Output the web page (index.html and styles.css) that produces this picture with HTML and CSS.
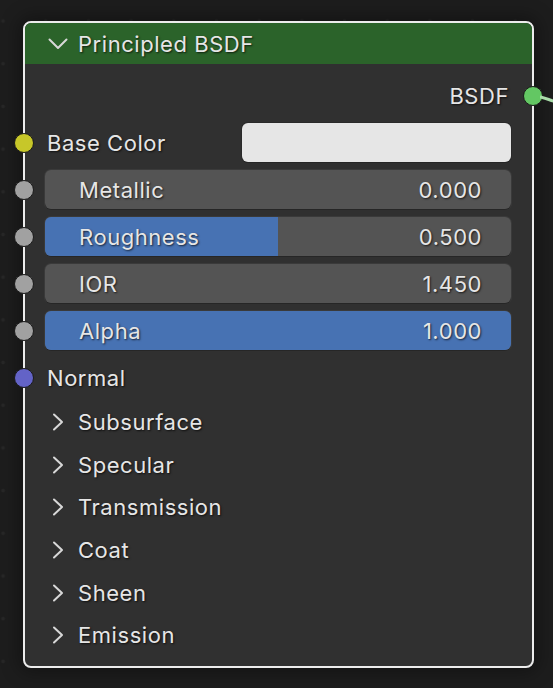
FILE: index.html
```html
<!DOCTYPE html>
<html>
<head>
<meta charset="utf-8">
<link rel="stylesheet" href="styles.css">
</head>
<body>
<div class="canvas">
  <div class="node">
    <div class="header">
      <svg class="hchev" width="20" height="12" viewBox="0 0 20 12"><polyline points="1.5,1.5 10,10 18.5,1.5" fill="none" stroke="#d8d8d8" stroke-width="2" stroke-linecap="round" stroke-linejoin="round"/></svg>
      <span class="title">Principled BSDF</span>
    </div>
    <div class="body">
      <div class="row out">
        <span class="label">BSDF</span>
        <span class="socket s-out green"></span>
        <svg class="link" width="16" height="12" viewBox="0 0 16 12"><path d="M0,3 C5,4 10,6 16,8" fill="none" stroke="#a9dba9" stroke-width="3"/></svg>
      </div>
      <div class="row">
        <span class="socket s-in yellow"></span>
        <span class="label plain">Base Color</span>
        <span class="color-field"></span>
      </div>
      <div class="row">
        <span class="socket s-in grey"></span>
        <div class="field"><span>Metallic</span><span>0.000</span></div>
      </div>
      <div class="row">
        <span class="socket s-in grey"></span>
        <div class="field"><div class="fill" style="width:50%"></div><span>Roughness</span><span>0.500</span></div>
      </div>
      <div class="row">
        <span class="socket s-in grey"></span>
        <div class="field"><span>IOR</span><span>1.450</span></div>
      </div>
      <div class="row">
        <span class="socket s-in grey"></span>
        <div class="field"><div class="fill" style="width:100%"></div><span>Alpha</span><span>1.000</span></div>
      </div>
      <div class="row">
        <span class="socket s-in blue"></span>
        <span class="label plain">Normal</span>
      </div>
      <div class="panels">
        <div class="panel"><svg class="pchev" width="12" height="18" viewBox="0 0 12 18"><polyline points="2,1.5 10,9 2,16.5" fill="none" stroke="#d8d8d8" stroke-width="2" stroke-linecap="round" stroke-linejoin="round"/></svg><span>Subsurface</span></div>
        <div class="panel"><svg class="pchev" width="12" height="18" viewBox="0 0 12 18"><polyline points="2,1.5 10,9 2,16.5" fill="none" stroke="#d8d8d8" stroke-width="2" stroke-linecap="round" stroke-linejoin="round"/></svg><span>Specular</span></div>
        <div class="panel"><svg class="pchev" width="12" height="18" viewBox="0 0 12 18"><polyline points="2,1.5 10,9 2,16.5" fill="none" stroke="#d8d8d8" stroke-width="2" stroke-linecap="round" stroke-linejoin="round"/></svg><span>Transmission</span></div>
        <div class="panel"><svg class="pchev" width="12" height="18" viewBox="0 0 12 18"><polyline points="2,1.5 10,9 2,16.5" fill="none" stroke="#d8d8d8" stroke-width="2" stroke-linecap="round" stroke-linejoin="round"/></svg><span>Coat</span></div>
        <div class="panel"><svg class="pchev" width="12" height="18" viewBox="0 0 12 18"><polyline points="2,1.5 10,9 2,16.5" fill="none" stroke="#d8d8d8" stroke-width="2" stroke-linecap="round" stroke-linejoin="round"/></svg><span>Sheen</span></div>
        <div class="panel"><svg class="pchev" width="12" height="18" viewBox="0 0 12 18"><polyline points="2,1.5 10,9 2,16.5" fill="none" stroke="#d8d8d8" stroke-width="2" stroke-linecap="round" stroke-linejoin="round"/></svg><span>Emission</span></div>
      </div>
    </div>
  </div>
</div>
</body>
</html>
```
FILE: styles.css
```css
* { box-sizing: border-box; }
html, body { margin: 0; padding: 0; }
body {
  width: 553px;
  height: 688px;
  overflow: hidden;
  background-color: #1d1d1d;
  background-image: radial-gradient(circle, #272727 0, #272727 1.6px, transparent 2.2px);
  background-size: 42.7px 42.7px;
  background-position: -18.3px -0.3px;
  font-family: Inter, "Noto Sans", "DejaVu Sans", sans-serif;
  color: #e6e6e6;
}
.canvas {
  padding: 21px 0 0 23px;
}
.node {
  position: relative;
  width: 511px;
  height: 647px;
  border: 2px solid #ececec;
  border-radius: 8px;
  background: #303030;
  box-shadow: 0 0 18px 4px rgba(0,0,0,0.35);
}
.header {
  height: 41px;
  background: #2b632a;
  border-radius: 6px 6px 0 0;
  display: flex;
  align-items: center;
  padding-left: 23px;
}
.hchev { margin-right: 10px; margin-top: 1px; }
.title, .label, .field span, .panel span {
  font-size: 22px;
  letter-spacing: 0.55px;
  text-shadow: 1px 1px 2px rgba(0,0,0,0.7);
}
.body {
  padding: 8px 0 10px 0;
}
.row {
  position: relative;
  height: 47px;
  display: flex;
  align-items: center;
  padding: 0 21px 0 20px;
}
.row.out {
  justify-content: flex-end;
  padding-right: 23px;
}
.label.plain { margin-left: 2px; }
.socket {
  position: absolute;
  top: 50%;
  width: 20px;
  height: 20px;
  margin-top: -10px;
  border-radius: 50%;
  border: 1.5px solid #1b1b1b;
}
.s-in { left: -11px; }
.s-out { right: -11px; }
.yellow { background: #c7c729; }
.grey { background: #a1a1a1; }
.blue { background: #6363c7; }
.green { background: #63c763; }
.link {
  position: absolute;
  left: calc(100% + 8px);
  top: 50%;
  margin-top: -2px;
}
.color-field {
  margin-left: auto;
  width: 269px;
  height: 39px;
  border-radius: 6px;
  background: #e6e6e6;
  box-shadow: 0 1px 0 #262626, 0 0 0 1px #2a2a2a;
}
.field {
  position: relative;
  flex: 1;
  height: 39px;
  border-radius: 6px;
  background: #545454;
  box-shadow: 0 1px 0 #262626, 0 0 0 1px #3a3a3a;
  display: flex;
  align-items: center;
  justify-content: space-between;
  padding: 0 29px 0 34px;
  overflow: hidden;
}
.fill {
  position: absolute;
  left: 0;
  top: 0;
  bottom: 0;
  background: #4772b3;
}
.field span { position: relative; }
.panels { display: flex; flex-direction: column; }
.panel {
  height: 42.6px;
  display: flex;
  align-items: center;
  padding-left: 27px;
}
.pchev { margin-right: 14px; }
```
